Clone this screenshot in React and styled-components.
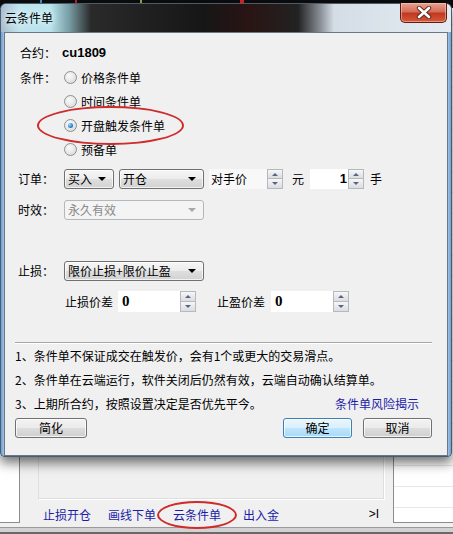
import React from 'react';
import styled, { createGlobalStyle } from 'styled-components';

const GlobalStyle = createGlobalStyle`
  html, body { margin: 0; padding: 0; }
  body {
    font-family: "Noto Sans CJK SC", "Liberation Sans", sans-serif;
    font-size: 12px;
    color: #000;
    background: #f0f0f0;
  }
`;

const Desktop = styled.div`
  position: relative;
  width: 453px;
  height: 534px;
  overflow: hidden;
  display: flex;
  flex-direction: column;
  background: #f0f0f0;
`;

/* ---------- the trading app behind the dialog ---------- */

const ChartStrip = styled.div`
  height: 8px;
  background:
    linear-gradient(90deg, transparent 0 40px, #3a8fd0 40px 42px, transparent 42px 75px, #c02020 75px 77px, transparent 77px 140px, #a0a040 140px 142px, transparent 142px 240px, #e02020 240px 244px, transparent 244px),
    #0c0c0c;
`;

const MainArea = styled.div`
  flex: 1;
  display: flex;
`;

const LeftPanel = styled.div`
  width: 19px;
  margin-bottom: 4px;
  background: #fff;
  border-right: 1px solid #8c8c8c;
  border-bottom: 1px solid #8c8c8c;
`;

const CenterPanel = styled.div`
  flex: 1;
  display: flex;
  flex-direction: column;
  padding: 0 9px 0 18px;
`;

const InnerBox = styled.div`
  flex: 1;
  border: 1px solid #dedede;
  border-top: none;
  box-shadow: 1px 1px 0 #fff;
`;

const LinkRow = styled.div`
  height: 26px;
  display: flex;
  align-items: center;
  gap: 17px;
  padding-left: 5px;
  margin-top: 2px;
`;

const AppLink = styled.span`
  position: relative;
  color: #1c1ca8;
  margin-left: ${p => (p.$extra ? '5px' : '0')};
`;

const Highlight = styled.span`
  position: absolute;
  left: -16px;
  right: -16px;
  top: 50%;
  height: 24px;
  margin-top: -13px;
  border: 2px solid #cf2b2b;
  border-radius: 50%;
`;

const EndMark = styled.span`
  margin-left: auto;
  margin-right: 5px;
  font-family: "Liberation Sans", sans-serif;
  color: #000;
`;

const RightPanel = styled.div`
  width: 59px;
  margin-bottom: 4px;
  border-left: 1px solid #8c8c8c;
  border-bottom: 1px solid #8c8c8c;
  background:
    repeating-linear-gradient(180deg, #fff 0 20px, #e4e8ee 20px 21px);
  background-position: 0 -4px;
`;

const StatusBar = styled.div`
  height: 7px;
  background: linear-gradient(180deg, #9a9a9a 0 1px, #d2d2d2 1px 5px, #6a6a6a 5px);
`;

/* ---------- dialog window ---------- */

const Dialog = styled.div`
  position: absolute;
  top: 3px;
  left: 0;
  width: 450px;
  height: 452px;
  display: flex;
  flex-direction: column;
  border: 1px solid #4a5c70;
  border-radius: 6px 6px 4px 4px;
  background: linear-gradient(90deg, #6f9fd0 0, #b9d3ee 1%, #d3e3f4 50%, #b9d3ee 99%, #6f9fd0 100%);
  box-shadow: 0 6px 12px rgba(0, 0, 0, 0.55);
`;

const TitleBar = styled.div`
  position: relative;
  height: 28px;
  display: flex;
  align-items: center;
  padding-left: 4px;
  border-radius: 5px 5px 0 0;
  background: linear-gradient(90deg,
    #a9bccb 0, #bfe4ee 4%, #b8e2ec 11%, #7aa0a8 15%, #2a2a2a 20%, #161616 45%,
    #2a1414 55%, #222 66%, #8a9098 71%, #d4dde6 74%, #e4ebf2 100%);
`;

const TitleText = styled.span`
  font-size: 12px;
  color: #000;
  text-shadow: 0 0 6px #e8fbff, 0 0 10px #e8fbff;
`;

const CloseButton = styled.div`
  position: absolute;
  top: -1px;
  right: 4px;
  width: 45px;
  height: 19px;
  display: flex;
  align-items: center;
  justify-content: center;
  border: 1px solid #5e1c12;
  border-top: none;
  border-radius: 0 0 5px 5px;
  background: linear-gradient(180deg, #e8a394 0, #d56d58 45%, #c0391f 55%, #d8593c 100%);
  box-shadow: inset 0 0 0 1px rgba(255, 210, 200, 0.5);
`;

const Client = styled.div`
  margin: 0 3px 0 3px;
  height: 415px;
  display: flex;
  flex-direction: column;
  padding: 10px 15px 0 10px;
  border: 1px solid #687888;
  background: #f0f0f0;
`;

const Form = styled.div`
  display: flex;
  flex-direction: column;
  padding-left: 3px;
`;

const Row = styled.div`
  display: flex;
  align-items: ${p => (p.$top ? 'flex-start' : 'center')};
  height: ${p => p.$h || 20}px;
  margin-top: ${p => p.$mt || 0}px;
  padding-left: ${p => p.$indent || 0}px;
`;

const Label = styled.span`
  width: 46px;
  flex: none;
  line-height: ${p => p.$lh || 20}px;
  padding-left: ${p => p.$nudge || 0}px;
  box-sizing: border-box;
`;

const Contract = styled.span`
  margin-left: -2px;
  font-family: "Liberation Sans", Arial, sans-serif;
  font-weight: bold;
  font-size: 13px;
`;

const RadioGroup = styled.div`
  position: relative;
  display: flex;
  flex-direction: column;
`;

const RadioRow = styled.label`
  height: 24px;
  display: flex;
  align-items: center;
  gap: 4px;
`;

const RadioDot = styled.span`
  position: relative;
  width: 11px;
  height: 11px;
  border-radius: 50%;
  border: 1px solid #8e9090;
  background: radial-gradient(circle at 40% 35%, #fbfbfb 0, #e6e6e6 55%, #cfcfcf 100%);
  &::after {
    content: '';
    display: ${p => (p.$on ? 'block' : 'none')};
    position: absolute;
    left: 3px;
    top: 3px;
    width: 5px;
    height: 5px;
    border-radius: 50%;
    background: radial-gradient(circle at 35% 35%, #9fdcff 0, #2f8fdc 50%, #0c4f98 100%);
  }
`;

const Ellipse = styled.div`
  position: absolute;
  left: -27px;
  top: 40px;
  width: 143px;
  height: 35px;
  border: 2px solid #cf2b2b;
  border-radius: 50%;
  pointer-events: none;
`;

const Select = styled.div`
  width: ${p => p.$w}px;
  height: 20px;
  box-sizing: border-box;
  flex: none;
  display: flex;
  align-items: center;
  justify-content: space-between;
  padding: 0 7px 0 3px;
  border: 1px solid ${p => (p.$disabled ? '#b3b8bc' : '#707070')};
  border-radius: 3px;
  color: ${p => (p.$disabled ? '#8a8a8a' : '#000')};
  background: ${p => (p.$disabled
    ? '#f4f4f4'
    : 'linear-gradient(180deg, #f6f6f6 0, #ececec 50%, #dedede 51%, #d2d2d2 100%)')};
  box-shadow: ${p => (p.$disabled ? 'none' : 'inset 0 0 0 1px rgba(255,255,255,0.7)')};
  margin-right: ${p => p.$mr || 0}px;
`;

const Caret = styled.span`
  width: 0;
  height: 0;
  border-left: 4px solid transparent;
  border-right: 4px solid transparent;
  border-top: 4px solid ${p => (p.$disabled ? '#a8a8a8' : '#000')};
`;

const SpinBox = styled.div`
  display: flex;
  height: ${p => p.$h || 20}px;
  flex: none;
`;

const SpinField = styled.div`
  width: ${p => p.$w}px;
  display: flex;
  align-items: center;
  justify-content: ${p => (p.$right ? 'flex-end' : 'flex-start')};
  padding: 0 ${p => (p.$right ? '1px' : '0')} 0 ${p => (p.$right ? '0' : p.$pl || 4)}px;
  box-sizing: border-box;
  background: ${p => p.$bg || '#fff'};
`;

const NumberText = styled.span`
  font-family: ${p => (p.$serif ? '"Liberation Serif", serif' : '"Liberation Sans", sans-serif')};
  font-weight: bold;
  font-size: ${p => (p.$serif ? 15 : 13)}px;
`;

const Spinner = styled.div`
  width: 16px;
  display: flex;
  flex-direction: column;
`;

const SpinHalf = styled.div`
  flex: 1;
  display: flex;
  align-items: center;
  justify-content: center;
  border: 1px solid #b4b9c0;
  border-top-width: ${p => (p.$down ? 0 : 1)}px;
  background: linear-gradient(180deg, #f7f7f7 0, #e9e9ea 50%, #dcdde0 100%);
  &::before {
    content: '';
    width: 0;
    height: 0;
    border-left: 3px solid transparent;
    border-right: 3px solid transparent;
    ${p => (p.$down ? 'border-top: 3px solid #55658a;' : 'border-bottom: 3px solid #55658a;')}
  }
`;

const Unit = styled.span`
  margin: 0 ${p => p.$mr || 0}px 0 ${p => p.$ml || 0}px;
`;

const Separator = styled.div`
  height: 2px;
  margin-top: 30px;
  background: #a8a8a8;
  border-bottom: 1px solid #fff;
  box-sizing: border-box;
`;

const Note = styled.div`
  height: 24px;
  display: flex;
  align-items: center;
  justify-content: space-between;
  padding-right: 13px;
  white-space: nowrap;
`;

const RiskLink = styled.span`
  color: #1c1ca8;
`;

const ButtonRow = styled.div`
  display: flex;
  margin-top: 2px;
  gap: 11px;
`;

const Button = styled.div`
  width: ${p => p.$w || 69}px;
  height: 20px;
  box-sizing: border-box;
  display: flex;
  align-items: center;
  justify-content: center;
  border: 1px solid ${p => (p.$focus ? '#3c7fb1' : '#707070')};
  border-radius: 3px;
  background: ${p => (p.$focus
    ? 'linear-gradient(180deg, #eaf6fd 0, #d9f0fc 50%, #bee6fd 51%, #a7d9f5 100%)'
    : 'linear-gradient(180deg, #f2f2f2 0, #ebebeb 50%, #dddddd 51%, #cfcfcf 100%)')};
  box-shadow: inset 0 0 0 1px rgba(255, 255, 255, 0.75);
  margin-left: ${p => (p.$push ? 'auto' : '0')};
`;

function Spin({ h, children }) {
  return (
    <SpinBox $h={h}>
      {children}
      <Spinner>
        <SpinHalf />
        <SpinHalf $down />
      </Spinner>
    </SpinBox>
  );
}

const options = ['价格条件单', '时间条件单', '开盘触发条件单', '预备单'];

export default function App() {
  return (
    <Desktop>
      <GlobalStyle />
      <ChartStrip />
      <MainArea>
        <LeftPanel />
        <CenterPanel>
          <InnerBox />
          <LinkRow>
            <AppLink>止损开仓</AppLink>
            <AppLink>画线下单</AppLink>
            <AppLink>云条件单<Highlight /></AppLink>
            <AppLink $extra>出入金</AppLink>
            <EndMark>&gt;I</EndMark>
          </LinkRow>
        </CenterPanel>
        <RightPanel />
      </MainArea>
      <StatusBar />

      <Dialog>
        <TitleBar>
          <TitleText>云条件单</TitleText>
          <CloseButton>
            <svg width="16" height="13" viewBox="0 0 16 13">
              <path d="M3 2 L13 11 M13 2 L3 11" stroke="#5a2a22" strokeWidth="4.4" strokeLinecap="round" />
              <path d="M3 2 L13 11 M13 2 L3 11" stroke="#fff" strokeWidth="2.6" strokeLinecap="round" />
            </svg>
          </CloseButton>
        </TitleBar>
        <Client>
          <Form>
            <Row>
              <Label $nudge={2}>合约：</Label>
              <Contract>cu1809</Contract>
            </Row>
            <Row $top $h={96} $mt={3}>
              <Label $lh={24} $nudge={2}>条件：</Label>
              <RadioGroup>
                {options.map((o, i) => (
                  <RadioRow key={o}>
                    <RadioDot $on={i === 2} />
                    {o}
                  </RadioRow>
                ))}
                <Ellipse />
              </RadioGroup>
            </Row>
            <Row $mt={7}>
              <Label>订单：</Label>
              <Select $w={50} $mr={5}>买入<Caret /></Select>
              <Select $w={85} $mr={5}>开仓<Caret /></Select>
              <Spin>
                <SpinField $w={58} $pl={2} $bg="#f8f8f8">对手价</SpinField>
              </Spin>
              <Unit $ml={9} $mr={6}>元</Unit>
              <Spin>
                <SpinField $w={38} $right><NumberText>1</NumberText></SpinField>
              </Spin>
              <Unit $ml={6}>手</Unit>
            </Row>
            <Row $mt={11}>
              <Label>时效：</Label>
              <Select $w={140} $disabled>永久有效<Caret $disabled /></Select>
            </Row>
            <Row $mt={41}>
              <Label>止损：</Label>
              <Select $w={140}>限价止损+限价止盈<Caret /></Select>
            </Row>
            <Row $mt={10} $h={21} $indent={47}>
              <Unit $mr={5}>止损价差</Unit>
              <Spin h={21}>
                <SpinField $w={62}><NumberText $serif>0</NumberText></SpinField>
              </Spin>
              <Unit $ml={21} $mr={6}>止盈价差</Unit>
              <Spin h={21}>
                <SpinField $w={62}><NumberText $serif>0</NumberText></SpinField>
              </Spin>
            </Row>
          </Form>
          <Separator />
          <Note>1、条件单不保证成交在触发价，会有1个或更大的交易滑点。</Note>
          <Note>2、条件单在云端运行，软件关闭后仍然有效，云端自动确认结算单。</Note>
          <Note>
            <span>3、上期所合约，按照设置决定是否优先平今。</span>
            <RiskLink>条件单风险揭示</RiskLink>
          </Note>
          <ButtonRow>
            <Button $w={72}>简化</Button>
            <Button $push $focus>确定</Button>
            <Button>取消</Button>
          </ButtonRow>
        </Client>
      </Dialog>
    </Desktop>
  );
}
